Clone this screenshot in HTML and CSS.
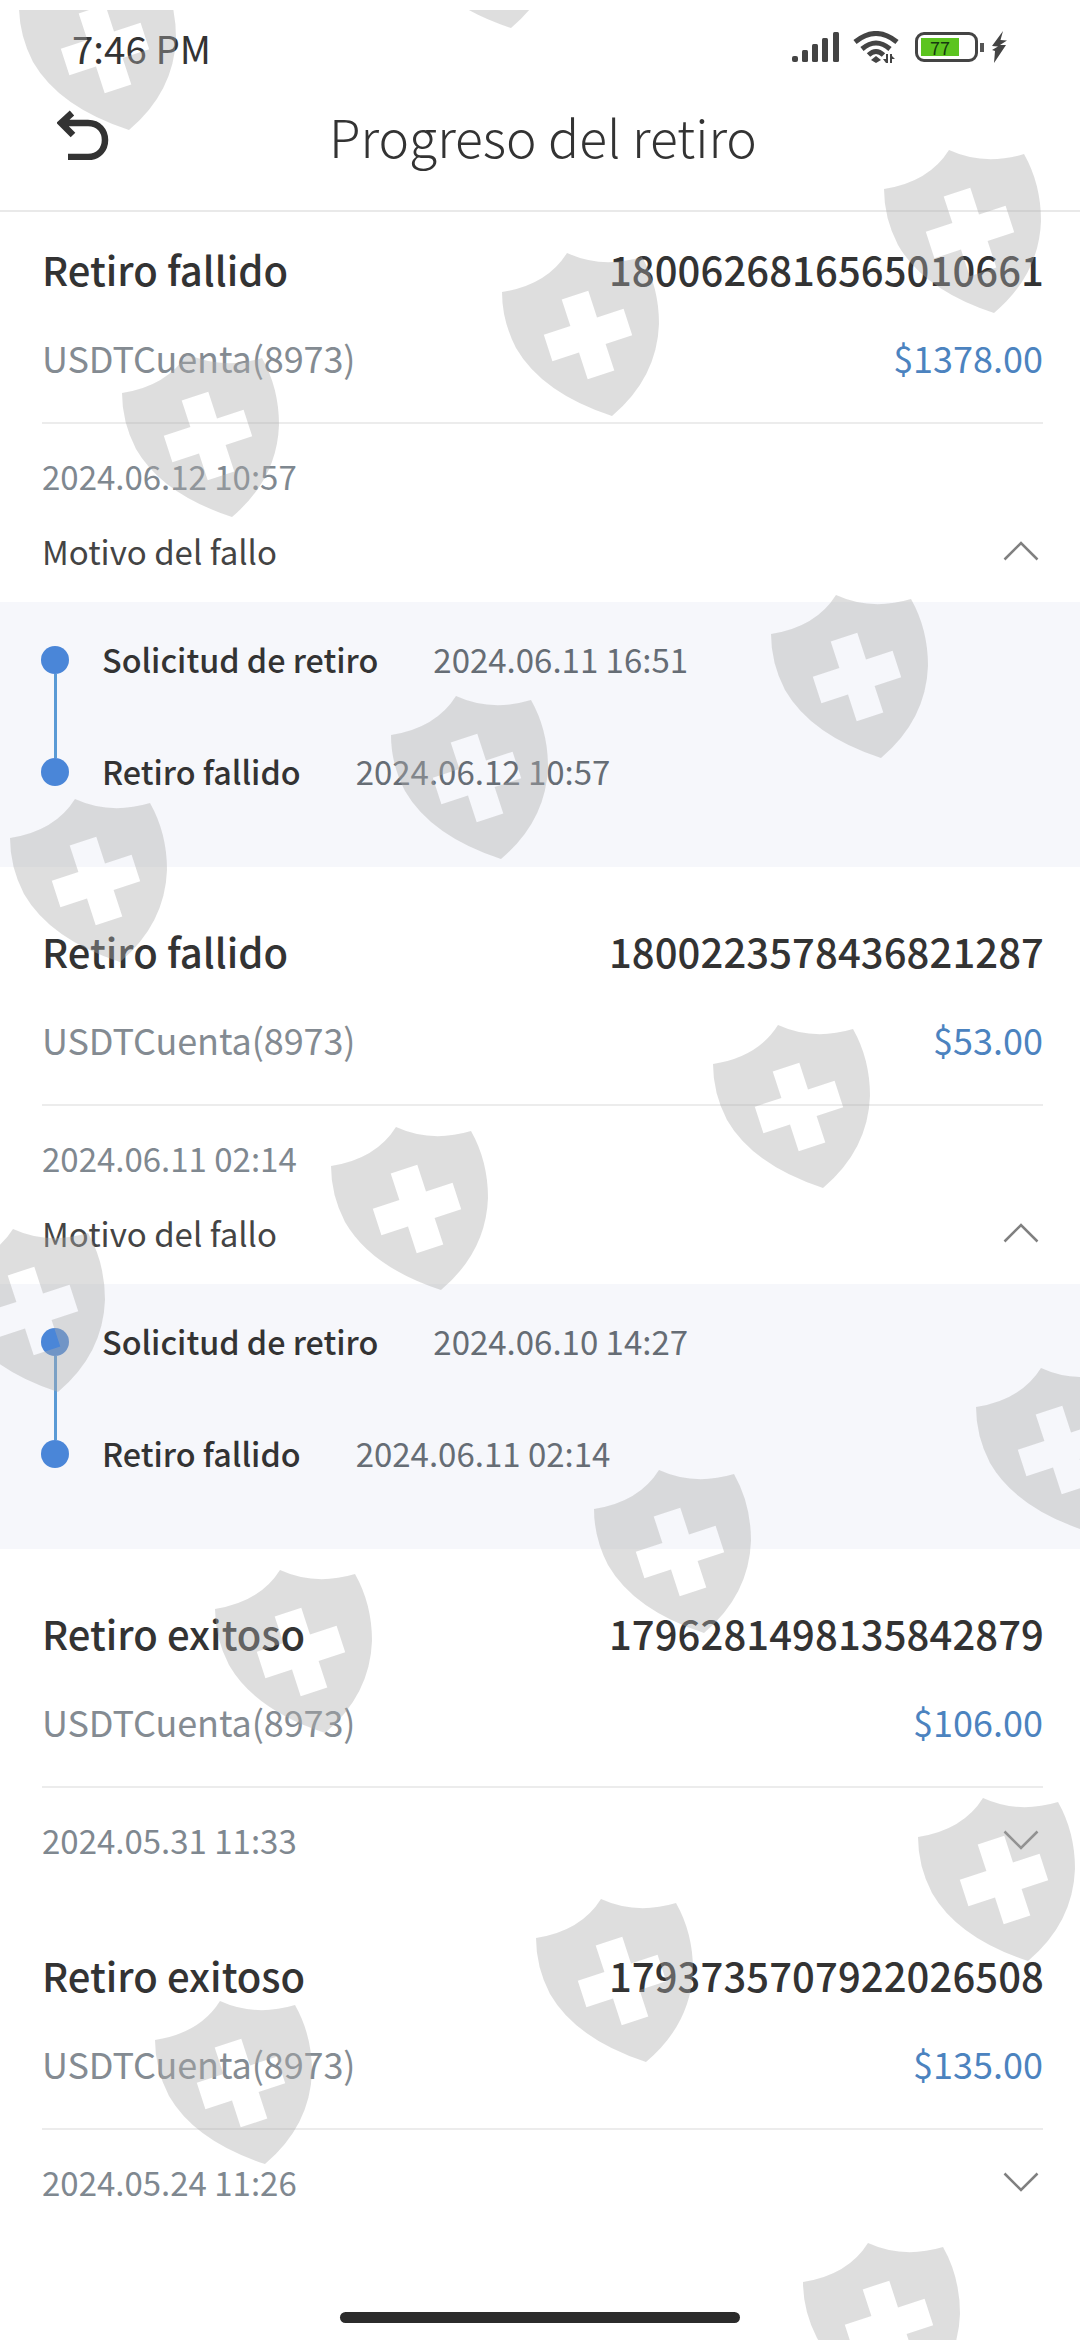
FILE: index.html
```html
<!DOCTYPE html>
<html lang="es">
<head>
    <meta charset="UTF-8">
    <meta name="viewport" content="width=device-width, initial-scale=1.0">
    <title>Progreso del retiro</title>
    <link rel="stylesheet" href="styles.css">
</head>
<body>
    <svg class="defs" width="0" height="0">
        <symbol id="shield" viewBox="0 0 157 163">
            <path fill-rule="evenodd" d="M65 0Q100 16 140 4Q157 34 157 71Q155 125 110 163Q40 140 14 95Q0 68 0 39Q45 32 65 0ZM59.7 46.4L86.3 37.7L95 64.4L121.6 55.7L130.2 82.3L103.6 91L112.3 117.6L85.7 126.2L77 99.6L50.4 108.3L41.8 81.7L68.4 73Z"/>
        </symbol>
        <symbol id="chevron-up" viewBox="0 0 36 20">
            <path d="M1.500 18.500L18 2L34.500 18.500"/>
        </symbol>
        <symbol id="chevron-down" viewBox="0 0 36 20">
            <path d="M1.500 1.500L18 18L34.500 1.500"/>
        </symbol>
    </svg>

    <!-- Status bar -->
    <div class="status-bar">
        <span class="clock">7:46 PM</span>
        <div class="status-icons">
            <svg class="icon-signal" viewBox="0 0 48 30" width="48" height="30">
                <rect x="0" y="24" width="6" height="6" rx="2"/>
                <rect x="10" y="18" width="6" height="12" rx="1.500"/>
                <rect x="20" y="12" width="6" height="18" rx="1.500"/>
                <rect x="30" y="6" width="6" height="24" rx="1.500"/>
                <rect x="41" y="0" width="6" height="30" rx="1.500"/>
            </svg>
            <svg class="icon-wifi" viewBox="0 0 46 32" width="46" height="32">
                <path class="arc" d="M2 11Q23 -6 44 11"/>
                <path class="arc" d="M9 18Q23 6 37 18"/>
                <path class="arc" d="M15.500 24Q23 17 30.500 24"/>
                <path class="solid" d="M23 25L28 29L23 32L18 29Z"/>
                <path class="solid" d="M33 23H35V32H33L30 28H33ZM37 23H39V25L42 28H39V32H37Z"/>
            </svg>
            <div class="battery">
                <div class="battery-body">
                    <div class="battery-fill">77</div>
                </div>
                <div class="battery-nub"></div>
            </div>
            <svg class="icon-bolt" viewBox="0 0 18 32" width="18" height="32">
                <path d="M13 0L2 15L8 15.500L2 19L5 20L4 32L16 14L10 14L17 9.500L10.500 9Z"/>
            </svg>
        </div>
    </div>

    <!-- Nav bar -->
    <header class="nav-bar">
        <svg class="icon-back" viewBox="0 0 52 50" width="52" height="50">
            <path d="M15 3L4 13L16 25M4 13H31C42 13 48 21 48 30C48 39 42 47 31 47H11"/>
        </svg>
        <h1 class="nav-title">Progreso del retiro</h1>
    </header>

    <main>
        <!-- Failed withdrawals -->
        <section class="item item-open">
            <div class="row title-row">
                <span class="status">Retiro fallido</span>
                <span class="order-no">1800626816565010661</span>
            </div>
            <div class="row sub-row">
                <span class="account">USDTCuenta(8973)</span>
                <span class="amount">$1378.00</span>
            </div>
            <div class="row date-row"><span class="date">2024.06.12 10:57</span></div>
            <div class="row reason-row">
                <span class="reason">Motivo del fallo</span>
                <svg class="chevron"><use href="#chevron-up"/></svg>
            </div>
            <div class="timeline">
                <div class="rail"><span class="dot"></span><span class="rail-line"></span><span class="dot"></span></div>
                <div class="steps">
                    <div class="step"><span class="step-name">Solicitud de retiro</span><span class="step-date">2024.06.11 16:51</span></div>
                    <div class="step"><span class="step-name">Retiro fallido</span><span class="step-date">2024.06.12 10:57</span></div>
                </div>
            </div>
        </section>

        <section class="item item-open">
            <div class="row title-row">
                <span class="status">Retiro fallido</span>
                <span class="order-no">1800223578436821287</span>
            </div>
            <div class="row sub-row">
                <span class="account">USDTCuenta(8973)</span>
                <span class="amount">$53.00</span>
            </div>
            <div class="row date-row"><span class="date">2024.06.11 02:14</span></div>
            <div class="row reason-row">
                <span class="reason">Motivo del fallo</span>
                <svg class="chevron"><use href="#chevron-up"/></svg>
            </div>
            <div class="timeline">
                <div class="rail"><span class="dot"></span><span class="rail-line"></span><span class="dot"></span></div>
                <div class="steps">
                    <div class="step"><span class="step-name">Solicitud de retiro</span><span class="step-date">2024.06.10 14:27</span></div>
                    <div class="step"><span class="step-name">Retiro fallido</span><span class="step-date">2024.06.11 02:14</span></div>
                </div>
            </div>
        </section>

        <!-- Successful withdrawals -->
        <section class="item">
            <div class="row title-row">
                <span class="status">Retiro exitoso</span>
                <span class="order-no">1796281498135842879</span>
            </div>
            <div class="row sub-row">
                <span class="account">USDTCuenta(8973)</span>
                <span class="amount">$106.00</span>
            </div>
            <div class="row date-row">
                <span class="date">2024.05.31 11:33</span>
                <svg class="chevron"><use href="#chevron-down"/></svg>
            </div>
        </section>

        <section class="item">
            <div class="row title-row">
                <span class="status">Retiro exitoso</span>
                <span class="order-no">1793735707922026508</span>
            </div>
            <div class="row sub-row">
                <span class="account">USDTCuenta(8973)</span>
                <span class="amount">$135.00</span>
            </div>
            <div class="row date-row">
                <span class="date">2024.05.24 11:26</span>
                <svg class="chevron"><use href="#chevron-down"/></svg>
            </div>
        </section>
    </main>

    <div class="home-bar"></div>

    <!-- Watermark over the whole page -->
    <div class="watermarks">
        <svg class="wm wm-1"><use href="#shield"/></svg>
        <svg class="wm wm-2"><use href="#shield"/></svg>
        <svg class="wm wm-3"><use href="#shield"/></svg>
        <svg class="wm wm-4"><use href="#shield"/></svg>
        <svg class="wm wm-5"><use href="#shield"/></svg>
        <svg class="wm wm-6"><use href="#shield"/></svg>
        <svg class="wm wm-7"><use href="#shield"/></svg>
        <svg class="wm wm-8"><use href="#shield"/></svg>
        <svg class="wm wm-9"><use href="#shield"/></svg>
        <svg class="wm wm-10"><use href="#shield"/></svg>
        <svg class="wm wm-11"><use href="#shield"/></svg>
        <svg class="wm wm-12"><use href="#shield"/></svg>
        <svg class="wm wm-13"><use href="#shield"/></svg>
        <svg class="wm wm-14"><use href="#shield"/></svg>
        <svg class="wm wm-15"><use href="#shield"/></svg>
        <svg class="wm wm-16"><use href="#shield"/></svg>
        <svg class="wm wm-17"><use href="#shield"/></svg>
        <svg class="wm wm-18"><use href="#shield"/></svg>
    </div>
</body>
</html>
```

FILE: styles.css
```css
html, body {
    height: 2340px;
    overflow: hidden;
}
body {
    position: relative;
    margin: 0;
    background-color: white;
    color: #333;
    font-family: "Noto Sans CJK SC", "Noto Sans", sans-serif;
}
.defs {
    position: absolute;
}

/* Status bar */
.status-bar {
    display: flex;
    align-items: center;
    justify-content: space-between;
    box-sizing: border-box;
    height: 70px;
    padding: 24px 72px 0 72px;
}
.clock {
    font-size: 38.500px;
    line-height: 40px;
    color: #333;
}
.status-icons {
    display: flex;
    align-items: center;
    gap: 13px;
    fill: #444;
}
.icon-wifi .arc {
    fill: none;
    stroke: #444;
    stroke-width: 5;
}
.battery {
    display: flex;
    align-items: center;
    gap: 2px;
    margin-left: 3px;
}
.battery-body {
    box-sizing: border-box;
    width: 63px;
    height: 30px;
    padding: 3px;
    border: 3px solid #444;
    border-radius: 9px;
}
.battery-fill {
    width: 38px;
    height: 18px;
    background-color: #5cc41f;
    color: #163a10;
    font-size: 18px;
    line-height: 18px;
    text-align: center;
}
.battery-nub {
    width: 4px;
    height: 9px;
    background-color: #555;
}
.icon-bolt {
    margin-left: -7px;
}

/* Nav bar */
.nav-bar {
    position: relative;
    height: 140px;
    border-bottom: 2px solid #e9e9e9;
    display: flex;
    align-items: center;
    justify-content: center;
}
.icon-back {
    position: absolute;
    left: 57px;
    top: 40px;
    fill: none;
    stroke: #333;
    stroke-width: 6.500;
}
.nav-title {
    margin: 0 0 10px 6px;
    font-size: 51.500px;
    font-weight: 300;
    color: #333;
}

/* List items */
.item {
    padding-top: 30px;
    padding-bottom: 52px;
}
.item-open {
    padding-bottom: 27px;
}
.row {
    display: flex;
    align-items: center;
    justify-content: space-between;
}
.title-row, .sub-row, .date-row, .reason-row {
    margin: 0 37px 0 42px;
}
.title-row {
    height: 54px;
    margin-right: 36px;
    padding-bottom: 6px;
}
.status {
    font-size: 40px;
    font-weight: 500;
    color: #333;
}
.order-no {
    font-size: 40px;
    font-weight: 500;
    letter-spacing: 0.1px;
    color: #333;
}
.sub-row {
    height: 54px;
    margin-top: 28px;
    padding-bottom: 38px;
    border-bottom: 2px solid #ececec;
}
.account {
    font-size: 36px;
    letter-spacing: -0.1px;
    color: #848b92;
}
.amount {
    font-size: 36px;
    color: #4c83bf;
}
.date-row {
    height: 47px;
    margin-top: 28px;
    padding-bottom: 3px;
}
.date {
    font-size: 33px;
    color: #7f8890;
}
.reason-row {
    height: 48px;
    margin-top: 25px;
    padding-bottom: 2px;
}
.reason {
    font-size: 33px;
    color: #444;
}
.chevron {
    width: 36px;
    height: 20px;
    margin-right: 4px;
    fill: none;
    stroke: #808080;
    stroke-width: 2.500;
}

/* Timeline */
.timeline {
    display: flex;
    margin-top: 25px;
    padding: 33px 0 72px 41px;
    background-color: #f6f7fb;
}
.rail {
    display: flex;
    flex-direction: column;
    align-items: center;
    margin-top: 11px;
    height: 140px;
}
.dot {
    flex: none;
    width: 28px;
    height: 28px;
    border-radius: 50%;
    background-color: #4a86d8;
}
.rail-line {
    flex: 1;
    width: 3px;
    background-color: #5a9ad5;
}
.steps {
    display: flex;
    flex-direction: column;
    gap: 64px;
    margin-left: 33px;
}
.step {
    display: flex;
    align-items: center;
    gap: 55px;
    height: 48px;
}
.step-name {
    font-size: 32.300px;
    font-weight: 500;
    color: #333;
}
.step-date {
    font-size: 33px;
    color: #666d75;
}

.home-bar {
    position: absolute;
    left: 340px;
    top: 2312px;
    width: 400px;
    height: 11px;
    border-radius: 6px;
    background-color: #2b2b2b;
}

/* Watermark shields: each sits on its own spot of the page */
.watermarks {
    position: absolute;
    left: 0;
    top: 0;
    width: 1080px;
    height: 2340px;
    overflow: hidden;
    clip-path: inset(10px 0 0 0);
    pointer-events: none;
}
.wm {
    position: absolute;
    width: 157px;
    height: 163px;
    fill: rgba(172, 172, 172, 0.4);
}
.wm-1 { left: 19px; top: -33px; }
.wm-2 { left: 401px; top: -135px; }
.wm-3 { left: 884px; top: 150px; }
.wm-4 { left: 502px; top: 253px; }
.wm-5 { left: 122px; top: 354px; }
.wm-6 { left: 771px; top: 595px; }
.wm-7 { left: 391px; top: 696px; }
.wm-8 { left: 10px; top: 799px; }
.wm-9 { left: 713px; top: 1025px; }
.wm-10 { left: 331px; top: 1127px; }
.wm-11 { left: -52px; top: 1229px; }
.wm-12 { left: 976px; top: 1368px; }
.wm-13 { left: 594px; top: 1470px; }
.wm-14 { left: 215px; top: 1570px; }
.wm-15 { left: 918px; top: 1798px; }
.wm-16 { left: 536px; top: 1899px; }
.wm-17 { left: 155px; top: 2001px; }
.wm-18 { left: 803px; top: 2243px; }
```
